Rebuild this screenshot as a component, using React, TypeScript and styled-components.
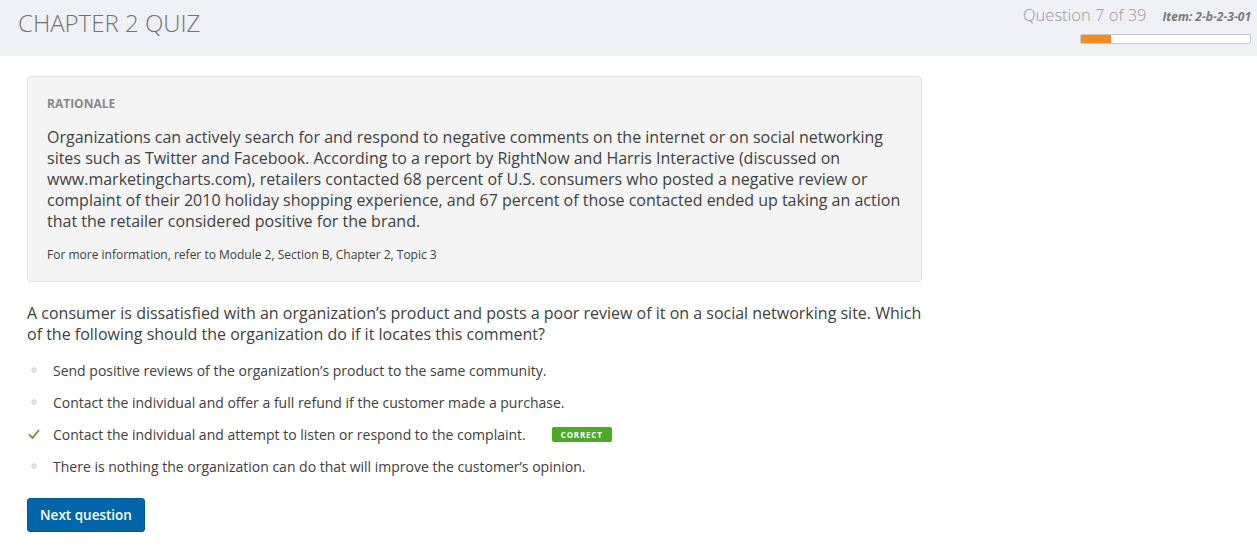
import React from "react";
import styled, { createGlobalStyle } from "styled-components";

const Global = createGlobalStyle`
  html, body { margin: 0; padding: 0; background: #fff; }
  body { font-family: "Open Sans", "Noto Sans", sans-serif; color: #404040; }
  * { box-sizing: border-box; }
`;

const Header = styled.header`
  height: 56px;
  background: #eff0f3;
  display: flex;
  justify-content: space-between;
  align-items: flex-start;
  padding: 0 6px 0 18px;
`;

const Title = styled.h1`
  margin: 0;
  padding-top: 6px;
  font-size: 24px;
  font-weight: 300;
  color: #6f747a;
  line-height: 34px;
`;

const Progress = styled.div`
  display: flex;
  flex-direction: column;
  align-items: flex-end;
  padding-top: 4px;
`;

const ProgressTop = styled.div`
  display: flex;
  align-items: baseline;
  gap: 16px;
`;

const QuestionCount = styled.span`
  font-size: 16.5px;
  font-weight: 300;
  color: #9a9a9a;
  line-height: 22px;
`;

const ItemCode = styled.span`
  font-size: 12px;
  font-weight: 700;
  font-style: italic;
  color: #7a7a7a;
`;

const Bar = styled.div`
  margin-top: 8px;
  width: 171px;
  height: 10px;
  border: 1px solid #c8c8c8;
  border-radius: 2px;
  background: #fff;
  overflow: hidden;
`;

const BarFill = styled.div`
  height: 100%;
  background: #f28c1e;
`;

const Main = styled.main`
  padding: 20px 27px 20px;
  width: 949px;
`;

const Rationale = styled.section`
  background: #f4f4f4;
  border: 1px solid #e2e2e2;
  border-radius: 4px;
  padding: 19px 19px 18px;
`;

const Label = styled.div`
  font-size: 12px;
  font-weight: 700;
  color: #888;
  line-height: 16px;
`;

const Paragraph = styled.p`
  margin: 15px 0 0;
  font-size: 16px;
  line-height: 21px;
  color: #404040;
`;

const Note = styled.p`
  margin: 14px 0 0;
  font-size: 12px;
  line-height: 17px;
  color: #404040;
`;

const Question = styled.p`
  margin: 21px 0 9px;
  font-size: 16px;
  line-height: 21px;
  color: #404040;
`;

const Options = styled.ul`
  list-style: none;
  margin: 0;
  padding: 0;
`;

const Option = styled.li`
  display: flex;
  align-items: center;
  height: 32px;
  font-size: 14px;
  color: #404040;
`;

const Marker = styled.span`
  width: 26px;
  display: flex;
  align-items: center;
  padding-left: 1px;
`;

const Badge = styled.span`
  margin-left: 26px;
  background: #4caa2a;
  color: #fff;
  font-size: 8px;
  font-weight: 700;
  letter-spacing: 0.8px;
  line-height: 15px;
  padding: 0 9px;
  border-radius: 2px;
`;

const Button = styled.button`
  margin-top: 16px;
  height: 34px;
  width: 118px;
  background: #0065a9;
  border: 1px solid #005a96;
  border-radius: 3px;
  color: #fff;
  font-family: "Open Sans", sans-serif;
  font-size: 13.5px;
  font-weight: 600;
  padding: 0;
  cursor: pointer;
`;

const Diamond = () => (
  <svg width="12" height="12" viewBox="0 0 12 12">
    <path d="M6 2.8 L9.2 6 L6 9.2 L2.8 6 Z" fill="#d0d0d0" />
    <path d="M6 4.6 L7.4 6 L6 7.4 L4.6 6 Z" fill="#f0f0f0" />
  </svg>
);

const Check = () => (
  <svg width="12" height="12" viewBox="0 0 12 12">
    <path d="M1.5 6.8 L4.6 10 L10.5 2.5" fill="none" stroke="#5a9e2f" strokeWidth="1.8" strokeLinecap="round" strokeLinejoin="round" />
  </svg>
);

const options = [
  { text: "Send positive reviews of the organization\u2019s product to the same community.", correct: false },
  { text: "Contact the individual and offer a full refund if the customer made a purchase.", correct: false },
  { text: "Contact the individual and attempt to listen or respond to the complaint.", correct: true },
  { text: "There is nothing the organization can do that will improve the customer\u2019s opinion.", correct: false },
];

export default function App() {
  const current = 7;
  const total = 39;
  return (
    <>
      <Global />
      <Header>
        <Title>CHAPTER 2 QUIZ</Title>
        <Progress>
          <ProgressTop>
            <QuestionCount>Question {current} of {total}</QuestionCount>
            <ItemCode>Item: 2-b-2-3-01</ItemCode>
          </ProgressTop>
          <Bar>
            <BarFill style={{ width: `${(current / total) * 100}%` }} />
          </Bar>
        </Progress>
      </Header>
      <Main>
        <Rationale>
          <Label>RATIONALE</Label>
          <Paragraph>
            Organizations can actively search for and respond to negative comments on the internet or on social networking
            sites such as Twitter and Facebook. According to a report by RightNow and Harris Interactive (discussed on
            www.marketingcharts.com), retailers contacted 68 percent of U.S. consumers who posted a negative review or
            complaint of their 2010 holiday shopping experience, and 67 percent of those contacted ended up taking an action
            that the retailer considered positive for the brand.
          </Paragraph>
          <Note>For more information, refer to Module 2, Section B, Chapter 2, Topic 3</Note>
        </Rationale>
        <Question>
          A consumer is dissatisfied with an organization&#8217;s product and posts a poor review of it on a social networking site. Which
          of the following should the organization do if it locates this comment?
        </Question>
        <Options>
          {options.map((o) => (
            <Option key={o.text}>
              <Marker>{o.correct ? <Check /> : <Diamond />}</Marker>
              {o.text}
              {o.correct && <Badge>CORRECT</Badge>}
            </Option>
          ))}
        </Options>
        <Button>Next question</Button>
      </Main>
    </>
  );
}
